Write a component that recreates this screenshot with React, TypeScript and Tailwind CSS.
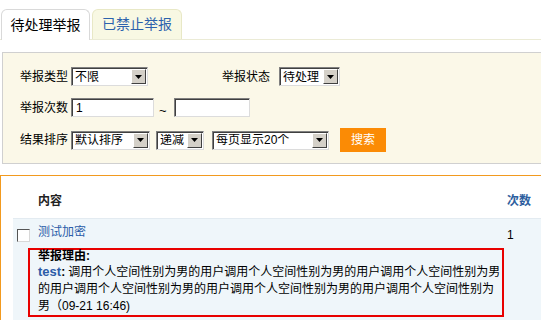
import React from 'react';

const FONT = "font-['Liberation_Sans','Noto_Sans_CJK_SC',sans-serif]";

function Arrow() {
  return (
    <span className="mr-[1px] flex h-[15px] w-[15px] shrink-0 items-center justify-center border border-b-[#404040] border-l-white border-r-[#404040] border-t-white bg-[#d4d0c8]">
      <svg width="7" height="4" viewBox="0 0 7 4">
        <path d="M0 0h7L3.5 4z" fill="#000" />
      </svg>
    </span>
  );
}

function Select({ label, className }: { label: string; className: string }) {
  return (
    <div
      className={`flex h-[19px] shrink-0 items-center border border-b-[#dcdcdc] border-l-[#808080] border-r-[#dcdcdc] border-t-[#808080] bg-white shadow-[inset_1px_1px_0_#404040] ${className}`}>
      <span className="flex-1 truncate pl-[3px] text-[12px] leading-none text-black">{label}</span>
      <Arrow />
    </div>
  );
}

function Input({ value, className }: { value?: string; className: string }) {
  return (
    <div
      className={`flex h-[19px] shrink-0 items-end border border-b-[#dcdcdc] border-l-[#808080] border-r-[#dcdcdc] border-t-[#808080] bg-white pb-[1px] pl-[4px] text-[12px] leading-[14px] shadow-[inset_1px_1px_0_#404040] ${className}`}>
      {value}
    </div>
  );
}

const reason =
  '调用个人空间性别为男的用户'.repeat(5) + '调用个人空间性别为男';

export default function App() {
  return (
    <div className={`h-[320px] w-[541px] overflow-hidden bg-white text-black ${FONT}`}>
      {/* tabs */}
      <div className="flex h-[40px] items-end gap-[2px] border-b border-[#ebebd6] pl-[1px]">
        <div className="-mb-px flex h-[31px] w-[89px] items-center justify-center rounded-t-[6px] border border-b-0 border-[#d9d9d9] bg-white text-[14px] text-black">
          待处理举报
        </div>
        <div className="flex h-[30px] w-[90px] items-center justify-center rounded-t-[6px] border border-b-0 border-[#e8e8c6] bg-[#f8f8e3] text-[14px] text-[#2c62ad]">
          已禁止举报
        </div>
      </div>

      {/* filter box */}
      <div className="ml-[2px] mt-[12px] flex h-[112px] flex-col border-y border-l border-[#d0d0d0] bg-[#fbf8e8] pl-[17px] text-[12px]">
        <div className="mt-[14px] flex h-[19px] items-center">
          <span className="w-[48px] shrink-0">举报类型</span>
          <Select label="不限" className="ml-[3px] w-[77px]" />
          <span className="ml-[74px] w-[48px] shrink-0">举报状态</span>
          <Select label="待处理" className="ml-[9px] w-[61px]" />
        </div>
        <div className="mt-[12px] flex h-[19px] items-center">
          <span className="w-[48px] shrink-0">举报次数</span>
          <Input value="1" className="ml-[3px] w-[83px]" />
          <span className="ml-[5px] mt-[6px] w-[15px] text-[13px]">~</span>
          <Input className="w-[76px]" />
        </div>
        <div className="mt-[11px] flex h-[24px] items-center">
          <span className="w-[48px] shrink-0">结果排序</span>
          <Select label="默认排序" className="ml-[3px] w-[79px]" />
          <Select label="递减" className="ml-[6px] w-[48px]" />
          <Select label="每页显示20个" className="ml-[8px] w-[117px]" />
          <button className="ml-[11px] flex h-[24px] w-[46px] items-center justify-center bg-[#fb8b05] text-[12px] text-white">
            搜索
          </button>
        </div>
      </div>

      {/* list */}
      <div className="mt-[11px] border-l border-t border-[#f29a1f]">
        <div className="flex h-[42px] items-end pb-[11px] pl-[37px] text-[12px] font-bold leading-[12px]">
          <span className="flex-1 text-[#222]">内容</span>
          <span className="w-[34px] text-[#2d5e9e]">次数</span>
        </div>
        <div className="ml-[12px] h-[110px] border-t border-[#e3ebf1] bg-[#eff6fa] pt-[5px]">
          <div className="flex items-start">
            <span className="ml-[4px] mt-[5px] h-[13px] w-[13px] shrink-0 border border-b-[#d8d8d8] border-l-[#555] border-r-[#d8d8d8] border-t-[#555] bg-white" />
            <span className="ml-[8px] flex-1 text-[12px] leading-[16px] text-[#2b5ca8]">测试加密</span>
            <span className="mt-[3px] w-[34px] text-[12px] leading-[16px]">1</span>
          </div>
          <div className="ml-[15px] mt-[5px] w-[476px] border-2 border-[#e80000] pl-[8px] text-[12px]">
            <div className="font-bold leading-[12px]">举报理由:</div>
            <div className="-mr-[3px] mt-[1px] leading-[17px]">
              <span className="text-[13px] font-bold text-[#2b5ca8]">test</span>
              <span className="mr-[3px] font-bold">:</span>
              {reason}
              （09-21 16:46)
            </div>
          </div>
        </div>
      </div>
    </div>
  );
}
